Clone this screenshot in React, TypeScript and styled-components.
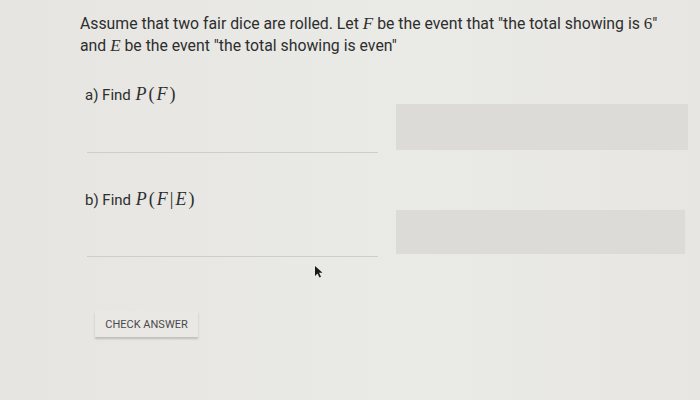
import styled, { createGlobalStyle } from "styled-components";

const Global = createGlobalStyle`
  html, body {
    margin: 0;
    padding: 0;
    background: #e8e7e3;
  }
  body {
    font-family: Roboto, "Liberation Sans", sans-serif;
    color: #2e2e2e;
  }
`;

const Page = styled.div`
  position: relative;
  width: 700px;
  height: 400px;
  box-sizing: border-box;
  padding: 13px 0 0 80px;
  overflow: hidden;
  background: linear-gradient(90deg, #e6e5e1 0%, #eaeae6 60%, #e7e6e2 100%);
`;

const Prompt = styled.p`
  margin: 0;
  width: 600px;
  font-size: 15.8px;
  line-height: 22px;
`;

// inline math pieces (italic variables, upright symbols)
const M = styled.span`
  font-family: "Liberation Serif", "DejaVu Serif", serif;
  font-style: italic;
  font-size: 17px;
  line-height: 1;
`;

const Up = styled.span`
  font-family: "Liberation Serif", "DejaVu Serif", serif;
  font-size: 17px;
  line-height: 1;
`;

const Part = styled.section<{ $top: number }>`
  display: flex;
  flex-direction: column;
  margin-top: ${(p) => p.$top}px;
`;

const Label = styled.div`
  padding-left: 5px;
  font-size: 15px;
  line-height: 18px;
  height: 18px;
  ${M}, ${Up} {
    font-size: 18px;
    margin: 0 1px;
  }
`;

const Row = styled.div<{ $gap: number }>`
  display: flex;
  align-items: flex-end;
  gap: 18px;
  margin-top: ${(p) => p.$gap}px;
`;

const Line = styled.div<{ $h: number }>`
  margin-left: 7px;
  width: 291px;
  height: ${(p) => p.$h}px;
  border-bottom: 1px solid #cdcdca;
`;

const Box = styled.div<{ $w: number; $h: number; $drop: number }>`
  width: ${(p) => p.$w}px;
  height: ${(p) => p.$h}px;
  margin-bottom: ${(p) => p.$drop}px;
  background: #dcdbd8;
`;

const Button = styled.button`
  margin: 54px 0 0 15px;
  width: 103px;
  height: 26px;
  padding: 0;
  border: none;
  background: #e9e8e5;
  box-shadow: 0 2px 2px rgba(0, 0, 0, 0.18);
  font-family: Roboto, "Liberation Sans", sans-serif;
  font-size: 11px;
  color: #4a4a4a;
  text-align: center;
`;

const Cursor = styled.svg`
  position: absolute;
  left: 314px;
  top: 265px;
`;

export default function App() {
  return (
    <>
      <Global />
      <Page>
        <Prompt>
          Assume that two fair dice are rolled. Let <M>F</M> be the event that
          "the total showing is <Up>6</Up>" and <M>E</M> be the event "the
          total showing is even"
        </Prompt>
        <Part $top={28}>
          <Label>
            a) Find <M>P</M>
            <Up>(</Up>
            <M>F</M>
            <Up>)</Up>
          </Label>
          <Row $gap={0}>
            <Line $h={49} />
            <Box $w={292} $h={46} $drop={3} />
          </Row>
        </Part>
        <Part $top={37}>
          <Label>
            b) Find <M>P</M>
            <Up>(</Up>
            <M>F</M>
            <Up>|</Up>
            <M>E</M>
            <Up>)</Up>
          </Label>
          <Row $gap={1}>
            <Line $h={47} />
            <Box $w={289} $h={44} $drop={3} />
          </Row>
        </Part>
        <Button>CHECK ANSWER</Button>
        <Cursor width="10" height="13" viewBox="0 0 10 13">
          <path d="M1 1 L1 11 L3.5 8.5 L5.5 12.5 L7 11.8 L5 7.8 L8.5 7.8 Z" fill="#1a1a1a" />
        </Cursor>
      </Page>
    </>
  );
}
